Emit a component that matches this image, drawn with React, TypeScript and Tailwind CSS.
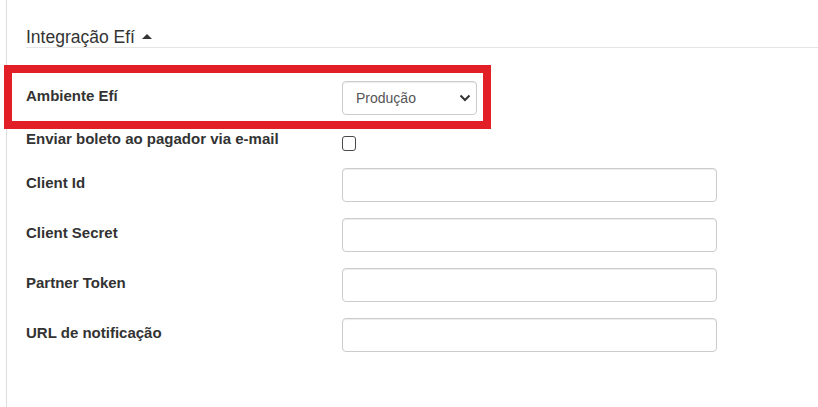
import React from "react";

const font = { fontFamily: '"Liberation Sans", Arial, sans-serif' };

function Row({ label, children, className = "" }: { label: string; children: React.ReactNode; className?: string }) {
  return (
    <div className={"flex items-start " + className}>
      <div className="w-[316px] shrink-0 pt-[5px] text-[15px] leading-[20px] font-bold text-[#333]">{label}</div>
      {children}
    </div>
  );
}

function TextInput() {
  return (
    <div className="w-[375px] h-[34px] border border-[#ccc] rounded-[4px] bg-white shadow-[inset_0_1px_1px_rgba(0,0,0,0.075)]" />
  );
}

export default function App() {
  return (
    <div className="relative w-[818px] h-[407px] bg-white overflow-hidden" style={font}>
      <div className="pl-[6px] h-full">
        <div className="border-l border-[#ddd] h-full pl-[19px]">
          <div className="pt-[27px]">
            <div className="flex items-center h-[20px] text-[17.5px] leading-[20px] text-[#333] border-b border-[#e5e5e5] box-content">
              <span>Integração Efí</span>
              <svg width="10" height="5" viewBox="0 0 10 5" className="ml-[7px] mt-[-2px]">
                <polygon points="0,5 5,0 10,5" fill="#333" />
              </svg>
            </div>
          </div>

          <Row label="Ambiente Efí" className="mt-[33px]">
            <div className="w-[135px] h-[34px] border border-[#ccc] rounded-[4px] bg-white shadow-[inset_0_1px_1px_rgba(0,0,0,0.075)] flex items-center justify-between pl-[13px] pr-[5px]">
              <span className="text-[14px] text-[#555] leading-[20px]">Produção</span>
              <svg width="12" height="8" viewBox="0 0 12 8">
                <polyline points="1.5,1.5 6,6 10.5,1.5" fill="none" stroke="#333" strokeWidth="2" />
              </svg>
            </div>
          </Row>

          <Row label="Enviar boleto ao pagador via e-mail" className="mt-[9px] h-[34px]">
            <div className="mt-[12px] w-[14px] h-[15px] border-[1.5px] border-[#4a4a4a] rounded-[3px] bg-white" />
          </Row>

          <Row label="Client Id" className="mt-[10px]">
            <TextInput />
          </Row>
          <Row label="Client Secret" className="mt-[16px]">
            <TextInput />
          </Row>
          <Row label="Partner Token" className="mt-[16px]">
            <TextInput />
          </Row>
          <Row label="URL de notificação" className="mt-[16px]">
            <TextInput />
          </Row>
        </div>
      </div>
      <div className="absolute left-[4px] top-[65px] w-[487px] h-[64px] border-[8px] border-[#e21f26] pointer-events-none" />
    </div>
  );
}
